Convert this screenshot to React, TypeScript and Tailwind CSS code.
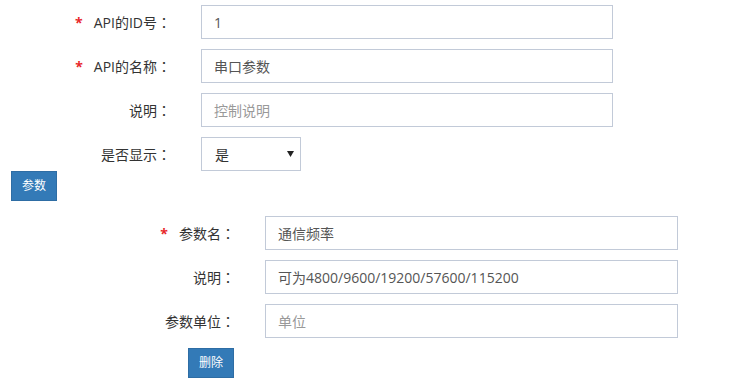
import React from "react";

const font = { fontFamily: '"Open Sans", "Noto Sans CJK SC", sans-serif' };
const colonFont = { fontFamily: '"Noto Sans CJK TC", sans-serif' };

function Row({
  label,
  required,
  labelWidth,
  children,
}: {
  label: string;
  required?: boolean;
  labelWidth: string;
  children: React.ReactNode;
}) {
  return (
    <div className="flex items-center h-[34px]">
      <div className={`${labelWidth} flex justify-end items-center text-[14px] text-[#333]`}>
        {required && <span className="text-[#e8282b] mr-[11px] text-[14px] font-bold">*</span>}
        <span>{label}</span>
        <span style={colonFont}>：</span>
      </div>
      <div className="ml-[30px]">{children}</div>
    </div>
  );
}

function TextBox({ value, placeholder, w }: { value?: string; placeholder?: string; w: string }) {
  return (
    <div
      className={`${w} h-[34px] border border-[#c2cad8] bg-white flex items-center px-[12px] text-[14px] ${
        value ? "text-[#555]" : "text-[#999]"
      }`}
    >
      {value ?? placeholder}
    </div>
  );
}

export default function App() {
  return (
    <div className="w-[749px] h-[390px] bg-white pt-[5px]" style={font}>
      <div className="flex flex-col gap-[10px]">
        <Row label="API的ID号" required labelWidth="w-[171px]">
          <TextBox w="w-[412px]" value="1" />
        </Row>
        <Row label="API的名称" required labelWidth="w-[171px]">
          <TextBox w="w-[412px]" value="串口参数" />
        </Row>
        <Row label="说明" labelWidth="w-[171px]">
          <TextBox w="w-[412px]" placeholder="控制说明" />
        </Row>
        <Row label="是否显示" labelWidth="w-[171px]">
          <div className="w-[100px] h-[34px] border border-[#c2cad8] bg-white flex items-center justify-between pl-[13px] pr-[6px] text-[14px] text-[#333]">
            <span>是</span>
            <svg width="7" height="6" viewBox="0 0 7 6">
              <path d="M0 0 L7 0 L3.5 6 Z" fill="#222" />
            </svg>
          </div>
        </Row>
      </div>
      <div className="pl-[11px]">
        <button className="h-[30px] w-[46px] bg-[#337ab7] border border-[#2e6da4] text-white text-[12px] flex items-center justify-center">
          参数
        </button>
      </div>
      <div className="flex flex-col gap-[10px] mt-[15px]">
        <Row label="参数名" required labelWidth="w-[235px]">
          <TextBox w="w-[413px]" value="通信频率" />
        </Row>
        <Row label="说明" labelWidth="w-[235px]">
          <TextBox w="w-[413px]" value="可为4800/9600/19200/57600/115200" />
        </Row>
        <Row label="参数单位" labelWidth="w-[235px]">
          <TextBox w="w-[413px]" placeholder="单位" />
        </Row>
        <div className="pl-[188px]">
          <button className="h-[30px] w-[46px] bg-[#337ab7] border border-[#2e6da4] text-white text-[12px] flex items-center justify-center">
            删除
          </button>
        </div>
      </div>
    </div>
  );
}
